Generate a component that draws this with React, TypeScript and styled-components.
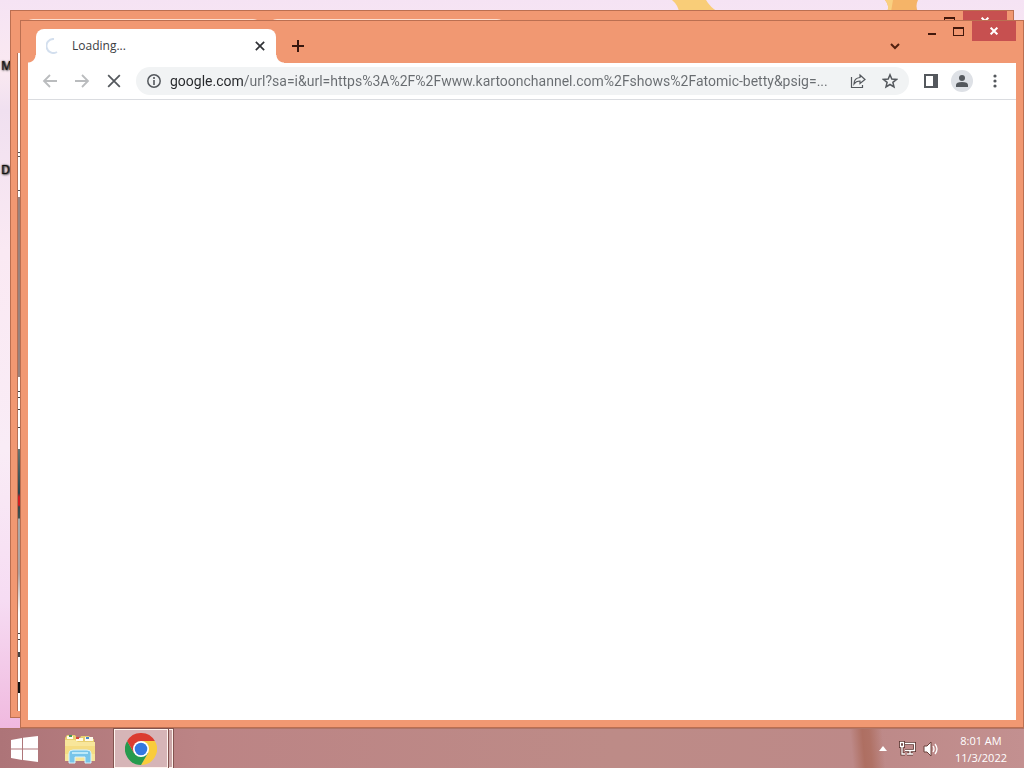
import React from 'react';
import styled, { createGlobalStyle } from 'styled-components';

const GlobalStyle = createGlobalStyle`
  *, *::before, *::after { box-sizing: border-box; }
  body { margin: 0; font-family: "Open Sans", "Noto Sans", sans-serif; font-size: 12px; color: #3c4043; }
  button { padding: 0; border: 0; background: none; font: inherit; color: inherit; }
  svg { display: block; }
`;

const Screen = styled.div`
  min-height: 100vh;
  display: flex;
  flex-direction: column;
  overflow: hidden;
`;

const Desktop = styled.main`
  position: relative;
  flex: 1;
  overflow: hidden;
  background: linear-gradient(180deg, #f5e3f4 0, #fae9f1 70px, #f0e0f0 110px, #fae9f3 250px, #f9ecf6 450px, #f6dcf3 600px, #f0b9df 728px);
`;

const Wallpaper = styled.svg`
  position: absolute;
  top: 0;
  right: 0;
`;

const Shortcut = styled.a<{ $top: number }>`
  position: absolute;
  left: 1px;
  top: ${(p) => p.$top}px;
  font-size: 12px;
  line-height: 16px;
  color: #111;
  text-decoration: none;
  text-shadow: 1px 0 1px #333, 0 0 2px #444, 1px 1px 2px #555;
`;

const Frame = styled.section<{ $back?: boolean }>`
  position: absolute;
  inset: ${(p) => (p.$back ? '10px 10px 10px 10px' : '20px 0 0 20px')};
  display: flex;
  flex-direction: column;
  padding: ${(p) => (p.$back ? '0 6px 6px' : '0 7px 7px')};
  background: #f19872;
  border: 1px solid #bb6f51;
`;

const TitleBar = styled.header`
  display: flex;
  height: 42px;
  padding: 8px 0 0 8px;
`;

const BackTab = styled.div`
  width: 236px;
  height: 34px;
  margin-right: 8px;
  border-top: 1px solid #fce0d2;
  border-radius: 8px 8px 0 0;
`;

const Tab = styled.div`
  position: relative;
  display: flex;
  align-items: center;
  width: 240px;
  height: 34px;
  padding: 0 8px 0 10px;
  background: #fff;
  border-radius: 8px 8px 0 0;
  &::before, &::after {
    content: "";
    position: absolute;
    bottom: 0;
    width: 8px;
    height: 8px;
  }
  &::before { left: -8px; background: radial-gradient(circle at 0 0, transparent 7px, #fff 8px); }
  &::after { right: -8px; background: radial-gradient(circle at 100% 0, transparent 7px, #fff 8px); }
`;

const TabTitle = styled.span`
  flex: 1;
  padding-left: 10px;
  font-size: 12px;
  line-height: 16px;
`;

const IconButton = styled.button<{ $size: number; $color?: string; $fill?: string }>`
  display: grid;
  place-items: center;
  flex: none;
  width: ${(p) => p.$size}px;
  height: ${(p) => p.$size}px;
  color: ${(p) => p.$color ?? '#54585d'};
  background: ${(p) => p.$fill ?? 'transparent'};
  border-radius: 50%;
`;

const NewTab = styled(IconButton)`
  margin: 3px 0 0 8px;
`;

const TabSearch = styled(IconButton)`
  margin: 3px 0 0 auto;
`;

const Controls = styled.div<{ $back?: boolean }>`
  display: flex;
  height: 20px;
  margin: -8px 0 0 ${(p) => (p.$back ? 'auto' : '9px')};
`;

const Control = styled.button<{ $close?: boolean }>`
  display: grid;
  place-items: center;
  width: ${(p) => (p.$close ? 44 : 27)}px;
  height: 20px;
  color: ${(p) => (p.$close ? '#fff' : '#42180c')};
  background: ${(p) => (p.$close ? '#c75050' : 'transparent')};
`;

const Toolbar = styled.div`
  display: flex;
  align-items: center;
  height: 37px;
  padding: 0 7px 0 8px;
  background: #fff;
  border-bottom: 1px solid #dadce0;
`;

const Navigation = styled.nav`
  display: flex;
  gap: 4px;
  margin-right: 8px;
`;

const AddressBar = styled.form`
  display: flex;
  align-items: center;
  flex: 1;
  min-width: 0;
  height: 28px;
  padding: 0 3px 0 10px;
  background: #f1f3f4;
  border-radius: 14px;
`;

const Address = styled.input`
  flex: 1;
  min-width: 0;
  height: 24px;
  margin-left: 8px;
  padding: 0;
  border: 0;
  outline: 0;
  font: 14px/20px Roboto, "Open Sans", sans-serif;
  color: transparent;
  background: linear-gradient(90deg, #26282b 73px, #686c70 73px);
  background-clip: text;
  -webkit-background-clip: text;
  text-overflow: ellipsis;
`;

const Actions = styled.div`
  display: flex;
  align-items: center;
  gap: 8px;
  margin-left: 10px;
`;

const Page = styled.article`
  flex: 1;
  background: #fff;
`;

const BackPage = styled(Page)`
  border-left: 1px solid #b57055;
  background:
    linear-gradient(#111, #111) 0 629px / 3px 11px no-repeat,
    linear-gradient(#555, #555) 0 99px / 3px 1px no-repeat,
    linear-gradient(#555, #555) 0 103px / 3px 1px no-repeat,
    linear-gradient(#555, #555) 0 137px / 3px 1px no-repeat,
    linear-gradient(#444, #444) 0 338px / 3px 1px no-repeat,
    linear-gradient(#444, #444) 0 344px / 3px 1px no-repeat,
    linear-gradient(#444, #444) 0 356px / 3px 1px no-repeat,
    linear-gradient(#444, #444) 0 374px / 3px 1px no-repeat,
    linear-gradient(#444, #444) 0 580px / 3px 1px no-repeat,
    linear-gradient(#444, #444) 0 586px / 3px 1px no-repeat,
    linear-gradient(#444, #444) 0 599px / 3px 5px no-repeat,
    linear-gradient(180deg, #fff 144px, #99827d 144px, #99827d 324px, #fff 324px, #fff 396px, #66736f 396px, #29454d 440px, #d31d20 444px, #d31d20 452px, #33494c 454px, #44514f 465px, #aaa 466px, #b0a09c 520px, #fff 560px);
`;

const Taskbar = styled.footer`
  display: flex;
  align-items: center;
  height: 40px;
  padding-right: 17px;
  color: #fff;
  background:
    linear-gradient(85deg, transparent 850px, #ae6f62 862px, #b07266 869px, transparent 882px),
    linear-gradient(90deg, #ad7478 0, #bc8485 200px, #bd8b87 60%, #bd8988 85%, #c39090 100%);
  border-top: 1px solid #ae7469;
`;

const TaskButton = styled.button<{ $width: number }>`
  display: grid;
  place-items: center;
  width: ${(p) => p.$width}px;
  height: 39px;
`;

const ActiveTask = styled.button`
  display: grid;
  place-items: center;
  width: 54px;
  height: 39px;
  margin-left: 2px;
  background: #d6b5b7;
  border: 1px solid #fff3ee;
  outline: 1px solid #82534f;
`;

const StackEdge = styled.span`
  width: 4px;
  height: 39px;
  margin-left: 1px;
  background: #cba6a7;
  border: 1px solid #fff3ee;
  border-left: 0;
  outline: 1px solid #82534f;
`;

const Tray = styled.div`
  display: flex;
  align-items: center;
  gap: 8px;
  margin-left: auto;
`;

const Clock = styled.time`
  margin-left: 8px;
  text-align: center;
  font-size: 11px;
  line-height: 17px;
`;

const MaximizeIcon = () => (
  <svg width="11" height="9" shapeRendering="crispEdges"><path d="M.5 1.5h10v7H.5zM0 .5h11" fill="none" stroke="currentColor" /></svg>
);

const CloseIcon = ({ size, width = 2 }: { size: number; width?: number }) => (
  <svg width={size} height={size} viewBox="0 0 12 12"><path d="M1 1l10 10M11 1L1 11" stroke="currentColor" strokeWidth={width} /></svg>
);

const WindowControls = ({ back }: { back?: boolean }) => (
  <Controls $back={back}>
    <Control aria-label="Minimize"><svg width="8" height="8"><path d="M0 6h8v2H0z" fill="currentColor" /></svg></Control>
    <Control aria-label="Maximize"><MaximizeIcon /></Control>
    <Control $close aria-label="Close"><CloseIcon size={8} width={3} /></Control>
  </Controls>
);

const Arrow = ({ flip }: { flip?: boolean }) => (
  <svg width="16" height="16" viewBox="0 0 16 16"><path d={flip ? 'M1 8h13M8 2l6 6-6 6' : 'M15 8H2M8 2L2 8l6 6'} fill="none" stroke="currentColor" strokeWidth="1.8" /></svg>
);

const FolderIcon = () => (
  <svg width="32" height="30" viewBox="0 0 32 30">
    <path d="M1 4l2-3h8l2 3h3l1-2h8l2 3h3v20H1z" fill="#e9cf70" />
    <path d="M3 2h6v3H3zM12 4h7v3h-7zM21 3h8v4h-8z" fill="#fffbe8" />
    <path d="M5 1h3v2H5z" fill="#47975a" /><path d="M12 3h3v2h-3z" fill="#d6473b" /><path d="M22 3h3v2h-3z" fill="#4c87c7" />
    <path d="M1 6h10l3 2h17v19H1z" fill="#f8e69b" />
    <path d="M1 12h30v8H1z" fill="#f5dc83" />
    <path d="M5 29V19q0-3 4-3h14q4 0 4 3v10h-6v-6H11v6z" fill="#78c5e9" stroke="#d9f3fb" />
    <path d="M8 19h16" stroke="#bde9f8" strokeWidth="2" />
  </svg>
);

const ChromeIcon = () => (
  <svg width="32" height="32" viewBox="0 0 32 32">
    <path d="M16 8h13.86A16 16 0 0 1 16 32l7-12z" fill="#f9cc3b" />
    <path d="M9 20L2.14 8A16 16 0 0 0 16 32l7-12z" fill="#269a4d" />
    <path d="M2.14 8L9 20l7-12h13.86A16 16 0 0 0 2.14 8z" fill="#db3c30" />
    <circle cx="16" cy="16" r="8" fill="#fff" /><circle cx="16" cy="16" r="6.3" fill="#3478df" />
  </svg>
);

export default function App() {
  return (
    <Screen>
      <GlobalStyle />
      <Desktop>
        <Wallpaper width="400" height="12" aria-hidden="true">
          <path d="M48 0h34q4 7 12 12H55q-1-7-7-12z" fill="#f9cd78" />
          <path d="M261 0h33q-3 6 0 12h-31q3-6-2-12z" fill="#f5b468" />
          <path d="M261 0h8l-2 12h-4q3-6-2-12z" fill="#f9d080" />
        </Wallpaper>
        <Shortcut href="#m" $top={58}>M</Shortcut>
        <Shortcut href="#d" $top={162}>D</Shortcut>

        <Frame $back>
          <TitleBar><BackTab /><BackTab /><WindowControls back /></TitleBar>
          <BackPage />
        </Frame>

        <Frame>
          <TitleBar>
            <Tab>
              <svg width="16" height="16" viewBox="0 0 16 16"><path d="M8 1a7 7 0 1 0 3 13" fill="none" stroke="#d3dfee" strokeWidth="2" /></svg>
              <TabTitle>Loading...</TabTitle>
              <IconButton $size={16} $color="#303236" aria-label="Close tab"><CloseIcon size={10} /></IconButton>
            </Tab>
            <NewTab $size={28} $color="#38170e" aria-label="New tab">
              <svg width="12" height="12"><path d="M6 0v12M0 6h12" stroke="currentColor" strokeWidth="2" /></svg>
            </NewTab>
            <TabSearch $size={28} $color="#52200f" aria-label="Search tabs">
              <svg width="10" height="7"><path d="M1 1l4 4 4-4" fill="none" stroke="currentColor" strokeWidth="2" /></svg>
            </TabSearch>
            <WindowControls />
          </TitleBar>
          <Toolbar>
            <Navigation>
              <IconButton $size={28} $color="#babcbe" aria-label="Back"><Arrow /></IconButton>
              <IconButton $size={28} $color="#babcbe" aria-label="Forward"><Arrow flip /></IconButton>
              <IconButton $size={28} aria-label="Stop"><CloseIcon size={14} width={1.5} /></IconButton>
            </Navigation>
            <AddressBar>
              <svg width="16" height="16" viewBox="0 0 16 16"><circle cx="8" cy="8" r="6.2" fill="none" stroke="#54585d" strokeWidth="1.5" /><path d="M8 4v2M8 7v5" stroke="#54585d" strokeWidth="1.6" /></svg>
              <Address aria-label="Address" defaultValue="google.com/url?sa=i&url=https%3A%2F%2Fwww.kartoonchannel.com%2Fshows%2Fatomic-betty&psig=..." />
              <IconButton type="button" $size={32} aria-label="Share">
                <svg width="16" height="16" viewBox="0 0 16 16"><path d="M1.5 4v10.500h11V12M10 2l5 4.500-5 4V8Q6 8 4 11q0-6 6-6.500z" fill="none" stroke="currentColor" strokeWidth="1.2" /></svg>
              </IconButton>
              <IconButton type="button" $size={32} aria-label="Bookmark">
                <svg width="16" height="16" viewBox="0 0 16 16"><path d="M8 1.800l1.800 4.200 4.700.4-3.600 3 1.100 4.600-4-2.500L4 14l1.100-4.600-3.600-3L6.200 6z" fill="none" stroke="currentColor" strokeWidth="1.500" /></svg>
              </IconButton>
            </AddressBar>
            <Actions>
              <IconButton $size={24} aria-label="Side panel">
                <svg width="14" height="14"><path d="M1 1h12v12H1z" fill="none" stroke="currentColor" strokeWidth="2" /><path d="M9 1h4v12H9z" fill="currentColor" /></svg>
              </IconButton>
              <IconButton $size={22} $fill="#dee1e6" aria-label="Profile">
                <svg width="12" height="12"><circle cx="6" cy="3" r="3" fill="currentColor" /><path d="M0 12v-2q0-3 6-3t6 3v2z" fill="currentColor" /></svg>
              </IconButton>
              <IconButton $size={28} aria-label="Menu">
                <svg width="4" height="14"><g fill="currentColor"><circle cx="2" cy="2" r="1.6" /><circle cx="2" cy="7" r="1.6" /><circle cx="2" cy="12" r="1.6" /></g></svg>
              </IconButton>
            </Actions>
          </Toolbar>
          <Page />
        </Frame>
      </Desktop>

      <Taskbar>
        <TaskButton $width={48} aria-label="Start">
          <svg width="27" height="26" viewBox="0 0 27 26"><path d="M0 4l11-2v10.500H0zM12 1.800L27 0v12.500H12zM0 13.500h11V24L0 22zM12 13.500h15V26l-15-2z" fill="#fff" /></svg>
        </TaskButton>
        <TaskButton $width={64} aria-label="File Explorer"><FolderIcon /></TaskButton>
        <ActiveTask aria-label="Google Chrome"><ChromeIcon /></ActiveTask>
        <StackEdge />
        <Tray>
          <TaskButton $width={16} aria-label="Show hidden icons"><svg width="8" height="5"><path d="M0 5l4-5 4 5z" fill="#fff" /></svg></TaskButton>
          <TaskButton $width={16} aria-label="Network">
            <svg width="17" height="15" viewBox="0 0 17 15">
              <g fill="none" stroke="#5b332e" strokeWidth="3"><path d="M6 2.500h9.500v7H6M8 13h6M11 10v3M1.500 1.500h3v4h-3zM3 6v7h3" /></g>
              <g fill="none" stroke="#fff" strokeWidth="1.300"><path d="M6 2.500h9.500v7H6M8 13h6M11 10v3M1.500 1.500h3v4h-3zM3 6v7h3" /></g>
            </svg>
          </TaskButton>
          <TaskButton $width={16} aria-label="Volume">
            <svg width="16" height="16" viewBox="0 0 16 16">
              <path d="M1 5h3l4-4v14l-4-4H1z" fill="#fff" stroke="#6b403a" />
              <path d="M10 5q2 3 0 6M12 3q4 5 0 10" fill="none" stroke="#fff" strokeWidth="1.300" />
            </svg>
          </TaskButton>
          <Clock>8:01 AM<br />11/3/2022</Clock>
        </Tray>
      </Taskbar>
    </Screen>
  );
}
